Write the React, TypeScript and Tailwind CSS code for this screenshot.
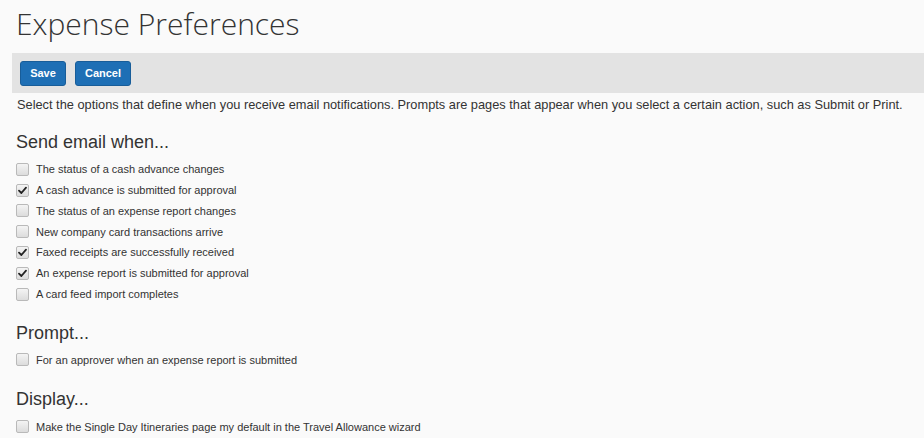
import React from 'react';

type Option = { id: string; label: string; checked: boolean };

const emailOptions: Option[] = [
    { id: 'ca-status', label: 'The status of a cash advance changes', checked: false },
    { id: 'ca-submitted', label: 'A cash advance is submitted for approval', checked: true },
    { id: 'er-status', label: 'The status of an expense report changes', checked: false },
    { id: 'card-tx', label: 'New company card transactions arrive', checked: false },
    { id: 'fax', label: 'Faxed receipts are successfully received', checked: true },
    { id: 'er-submitted', label: 'An expense report is submitted for approval', checked: true },
    { id: 'card-feed', label: 'A card feed import completes', checked: false },
];

const promptOptions: Option[] = [
    { id: 'approver', label: 'For an approver when an expense report is submitted', checked: false },
];

const displayOptions: Option[] = [
    { id: 'single-day', label: 'Make the Single Day Itineraries page my default in the Travel Allowance wizard', checked: false },
];

const CheckRow: React.FC<{ option: Option }> = ({ option }) => (
    <label className="flex items-center h-[20.8px] pl-[16px] gap-[7px] cursor-default">
        <span className="w-[13px] h-[13px] rounded-[2px] border border-[#b9b9b9] bg-gradient-to-b from-[#f4f4f4] to-[#dcdcdc] flex items-center justify-center shrink-0">
            {option.checked && (
                <svg width="9" height="9" viewBox="0 0 9 9">
                    <path d="M1 4.6 L3.4 7 L8 1.6" fill="none" stroke="#222" strokeWidth="1.8" strokeLinecap="round" strokeLinejoin="round" />
                </svg>
            )}
        </span>
        <span className="text-[11px] text-[#333] whitespace-nowrap">{option.label}</span>
    </label>
);

const Section: React.FC<{ title: string; options: Option[]; className?: string }> = ({ title, options, className }) => (
    <div className={className}>
        <h2 className="pl-[16px] text-[18px] leading-[24px] text-[#333] h-[24px]">{title}</h2>
        <div className="mt-[5px]">
            {options.map((o) => (
                <CheckRow key={o.id} option={o} />
            ))}
        </div>
    </div>
);

export default function App() {
    return (
        <div className="w-[924px] h-[438px] overflow-hidden bg-[#fafafa] font-['Liberation_Sans',Arial,sans-serif]">
            <h1 className="pl-[16px] pt-[2px] h-[53px] font-['Open_Sans',sans-serif] font-light text-[30px] leading-[44px] text-[#333]">
                Expense Preferences
            </h1>
            <div className="ml-[12px] h-[40px] bg-[#e3e3e3] flex items-center pl-[8px] gap-[9px]">
                <button className="h-[25px] w-[46px] rounded-[3px] bg-[#1e6fb5] border border-[#185d99] text-white text-[11px] font-bold">
                    Save
                </button>
                <button className="h-[25px] w-[56px] rounded-[3px] bg-[#1e6fb5] border border-[#185d99] text-white text-[11px] font-bold">
                    Cancel
                </button>
            </div>
            <p className="pl-[17px] pt-[3px] text-[12.8px] leading-[18px] text-[#333] whitespace-nowrap">
                Select the options that define when you receive email notifications. Prompts are pages that appear when you select a certain action, such as Submit or Print.
            </p>
            <Section title="Send email when..." options={emailOptions} className="mt-[16px]" />
            <Section title="Prompt..." options={promptOptions} className="mt-[16px]" />
            <Section title="Display..." options={displayOptions} className="mt-[17px]" />
        </div>
    );
}
